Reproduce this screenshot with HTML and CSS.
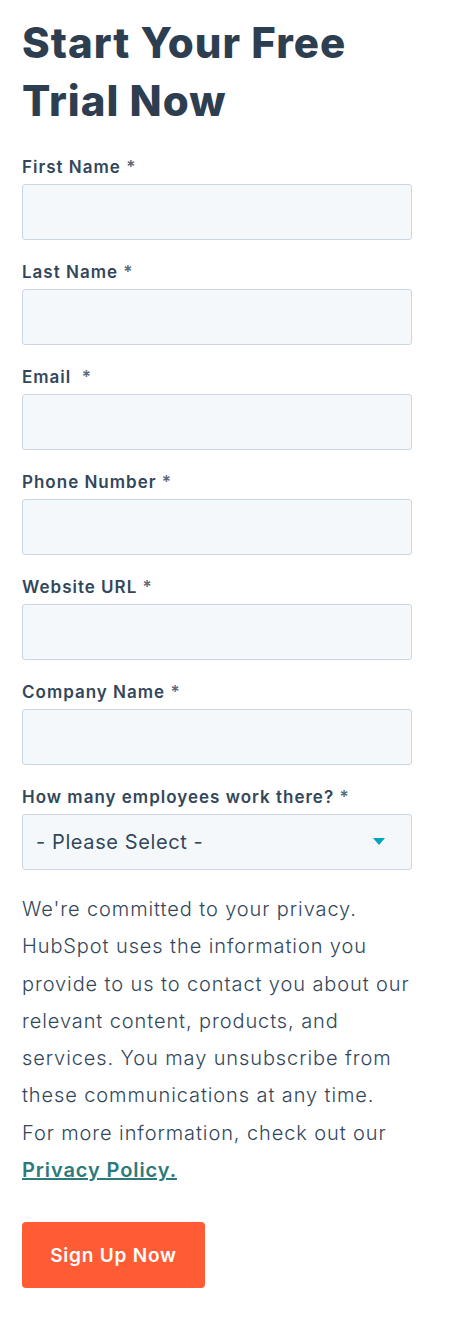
FILE: index.html
```html
<!DOCTYPE html>
<html>
<head>
  <meta charset="utf-8" />
  <title>Start Your Free Trial Now</title>
  <link rel="stylesheet" href="styles.css">
</head>
<body>

<h1>Start Your Free Trial Now</h1>

<form class="signup">
  <div class="field">
    <label>First Name <span class="req">*</span></label>
    <input type="text" class="input">
  </div>
  <div class="field">
    <label>Last Name <span class="req">*</span></label>
    <input type="text" class="input">
  </div>
  <div class="field">
    <label>Email &nbsp;<span class="req">*</span></label>
    <input type="email" class="input">
  </div>
  <div class="field">
    <label>Phone Number <span class="req">*</span></label>
    <input type="tel" class="input">
  </div>
  <div class="field">
    <label>Website URL <span class="req">*</span></label>
    <input type="text" class="input">
  </div>
  <div class="field">
    <label>Company Name <span class="req">*</span></label>
    <input type="text" class="input">
  </div>
  <div class="field">
    <label>How many employees work there? <span class="req">*</span></label>
    <div class="select">
      <span>- Please Select -</span>
      <svg width="12" height="8" viewBox="0 0 12 8"><path d="M0 0h12L6 7z" fill="#00a4bd"/></svg>
    </div>
  </div>

  <p class="legal">We're committed to your privacy. HubSpot uses the information you provide to us to contact you about our relevant content, products, and services. You may unsubscribe from these communications at any time. For more information, check out our <a href="#">Privacy Policy.</a></p>

  <button type="button" class="submit">Sign Up Now</button>
</form>

</body>
</html>
```

FILE: styles.css
```css
body {
  margin: 0;
  padding: 14px 22px 30px 22px;
  font-family: Inter, 'Noto Sans', sans-serif;
  color: #33475b;
  background: #fff;
}
h1 {
  margin: 0 0 26px 0;
  width: 400px;
  font-size: 42px;
  line-height: 58px;
  font-weight: 800;
  letter-spacing: 1px;
  color: #2d3e50;
}
.field {
  margin-bottom: 21px;
}
label {
  display: block;
  font-size: 17px;
  line-height: 22px;
  font-weight: 600;
  letter-spacing: 1px;
  margin-bottom: 6px;
}
.req {
  color: #5c6b7b;
}
.input,
.select {
  box-sizing: border-box;
  display: block;
  width: 390px;
  height: 56px;
  margin: 0;
  border: 1px solid #cbd6e2;
  border-radius: 3px;
  background: #f5f8fa;
}
.select {
  display: flex;
  align-items: center;
  justify-content: space-between;
  padding: 0 26px 0 13px;
  font-size: 20px;
  letter-spacing: 0.6px;
}
.legal {
  margin: 19px 0 33px 0;
  width: 389px;
  font-size: 20px;
  line-height: 37.3px;
  font-weight: 300;
  letter-spacing: 0.9px;
  color: #33475b;
}
.legal a {
  color: #2c7a7b;
  font-weight: 600;
  text-decoration: underline;
}
.submit {
  display: block;
  width: 183px;
  height: 66px;
  border: 0;
  border-radius: 4px;
  background: #ff5c35;
  color: #fff;
  font-family: Inter, sans-serif;
  font-size: 19px;
  font-weight: 600;
  letter-spacing: 0.8px;
}
```
